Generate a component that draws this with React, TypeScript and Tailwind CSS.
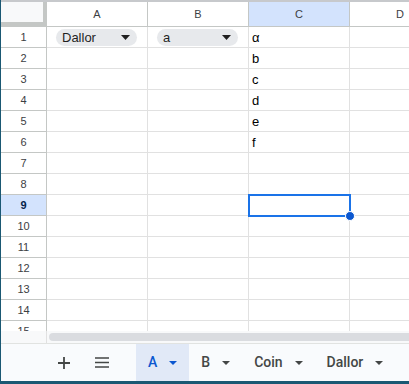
import React from 'react'

const font = { fontFamily: '"Liberation Sans", Arial, sans-serif' }

const colLetters = ['A', 'B', 'C', 'D']
const colC = ['α', 'b', 'c', 'd', 'e', 'f']

function Caret({ color = '#444746' }: { color?: string }) {
  return (
    <svg width="8" height="4" viewBox="0 0 8 4">
      <path d="M0 0 L8 0 L4 4 Z" fill={color} />
    </svg>
  )
}

function Chip({ label }: { label: string }) {
  return (
    <div className="ml-[9px] mr-[10px] flex h-[17px] w-full items-center justify-between rounded-full bg-[#e7e9ec] pl-[6px] pr-[7px] text-[13px] text-[#1f1f1f]">
      <span className="leading-none">{label}</span>
      <svg width="9" height="5" viewBox="0 0 9 5">
        <path d="M0 0 L9 0 L4.5 5 Z" fill="#1f1f1f" />
      </svg>
    </div>
  )
}

function Tab({ name, active }: { name: string; active?: boolean }) {
  return (
    <div
      className={`flex h-full items-center gap-3 px-3 text-[14px] font-medium ${active ? 'bg-[#e1e9f7] text-[#0b57d0]' : 'text-[#444746]'}`}
    >
      <span>{name}</span>
      <Caret color={active ? '#0b57d0' : '#444746'} />
    </div>
  )
}

export default function App() {
  const rows = Array.from({ length: 15 }, (_, i) => i + 1)

  return (
    <div className="relative flex h-[384px] w-[409px] flex-col overflow-hidden border-b-[3px] border-l border-[#1a5873] bg-white" style={font}>

      {/* Grid */}
      <div className="relative h-[331px] overflow-hidden border-t-2 border-[#c7c9cc]">
        {/* Column headers */}
        <div className="flex h-[25px] border-b border-[#c4c7c5]">
          <div className="w-[46px] shrink-0 border-b-4 border-r-4 border-[#c4c7c5] bg-[#f8f9fa]" />
          {colLetters.map((c) => (
            <div
              key={c}
              className={`flex w-[101px] shrink-0 items-center justify-center border-r border-[#c4c7c5] text-[11px] text-[#3c4043] ${c === 'C' ? 'bg-[#d3e3fd]' : ''}`}
            >
              {c}
            </div>
          ))}
        </div>

        {/* Rows */}
        {rows.map((r) => (
          <div key={r} className="flex h-[21px]">
            <div
              className={`flex w-[46px] shrink-0 items-center justify-center border-b border-r border-[#c4c7c5] text-[11px] ${r === 9 ? 'bg-[#d3e3fd] font-bold text-[#041e49]' : 'text-[#3c4043]'}`}
            >
              {r}
            </div>
            <div className="flex w-[101px] shrink-0 items-center border-b border-r border-[#e1e1e1]">
              {r === 1 && <Chip label="Dallor" />}
            </div>
            <div className="flex w-[101px] shrink-0 items-center border-b border-r border-[#e1e1e1]">
              {r === 1 && <Chip label="a" />}
            </div>
            <div className="flex w-[101px] shrink-0 items-end border-b border-r border-[#e1e1e1] pb-[2px] pl-[3px] text-[13px] leading-[15px] text-black">
              {colC[r - 1] ?? ''}
            </div>
            <div className="w-[101px] shrink-0 border-b border-[#e1e1e1]" />
          </div>
        ))}

        {/* Selection on C9 */}
        <div className="absolute left-[247px] top-[192px] h-[23px] w-[103px] border-2 border-[#1a73e8]" />
        <div className="absolute left-[344px] top-[209px] h-[10px] w-[10px] rounded-full border border-white bg-[#0b57d0]" />
      </div>

      {/* Scrollbar */}
      <div className="flex h-[13px] border-b border-[#e1e3e1] bg-[#f8f9fa]">
        <div className="w-[46px] shrink-0 border-r border-[#e1e1e1]" />
        <div className="ml-[2px] mt-[2px] h-[8px] flex-1 rounded-l-full bg-[#dadce0]" />
      </div>

      {/* Sheet tabs */}
      <div className="flex flex-1 items-center bg-[#f9fbfd] pl-[44px]" style={{ fontFamily: 'Roboto, "Liberation Sans", sans-serif' }}>
        <div className="flex h-full w-[38px] items-center justify-center">
          <svg width="12" height="12" viewBox="0 0 12 12">
            <path d="M6 0 V12 M0 6 H12" stroke="#444746" strokeWidth="1.8" />
          </svg>
        </div>
        <div className="flex h-full w-[38px] items-center justify-center">
          <svg width="14" height="11" viewBox="0 0 14 11">
            <path d="M0 1 H14 M0 5.5 H14 M0 10 H14" stroke="#444746" strokeWidth="1.6" />
          </svg>
        </div>
        <div className="ml-[15px] flex h-full">
          <Tab name="A" active />
          <Tab name="B" />
          <Tab name="Coin" />
          <Tab name="Dallor" />
        </div>
      </div>
    </div>
  )
}
